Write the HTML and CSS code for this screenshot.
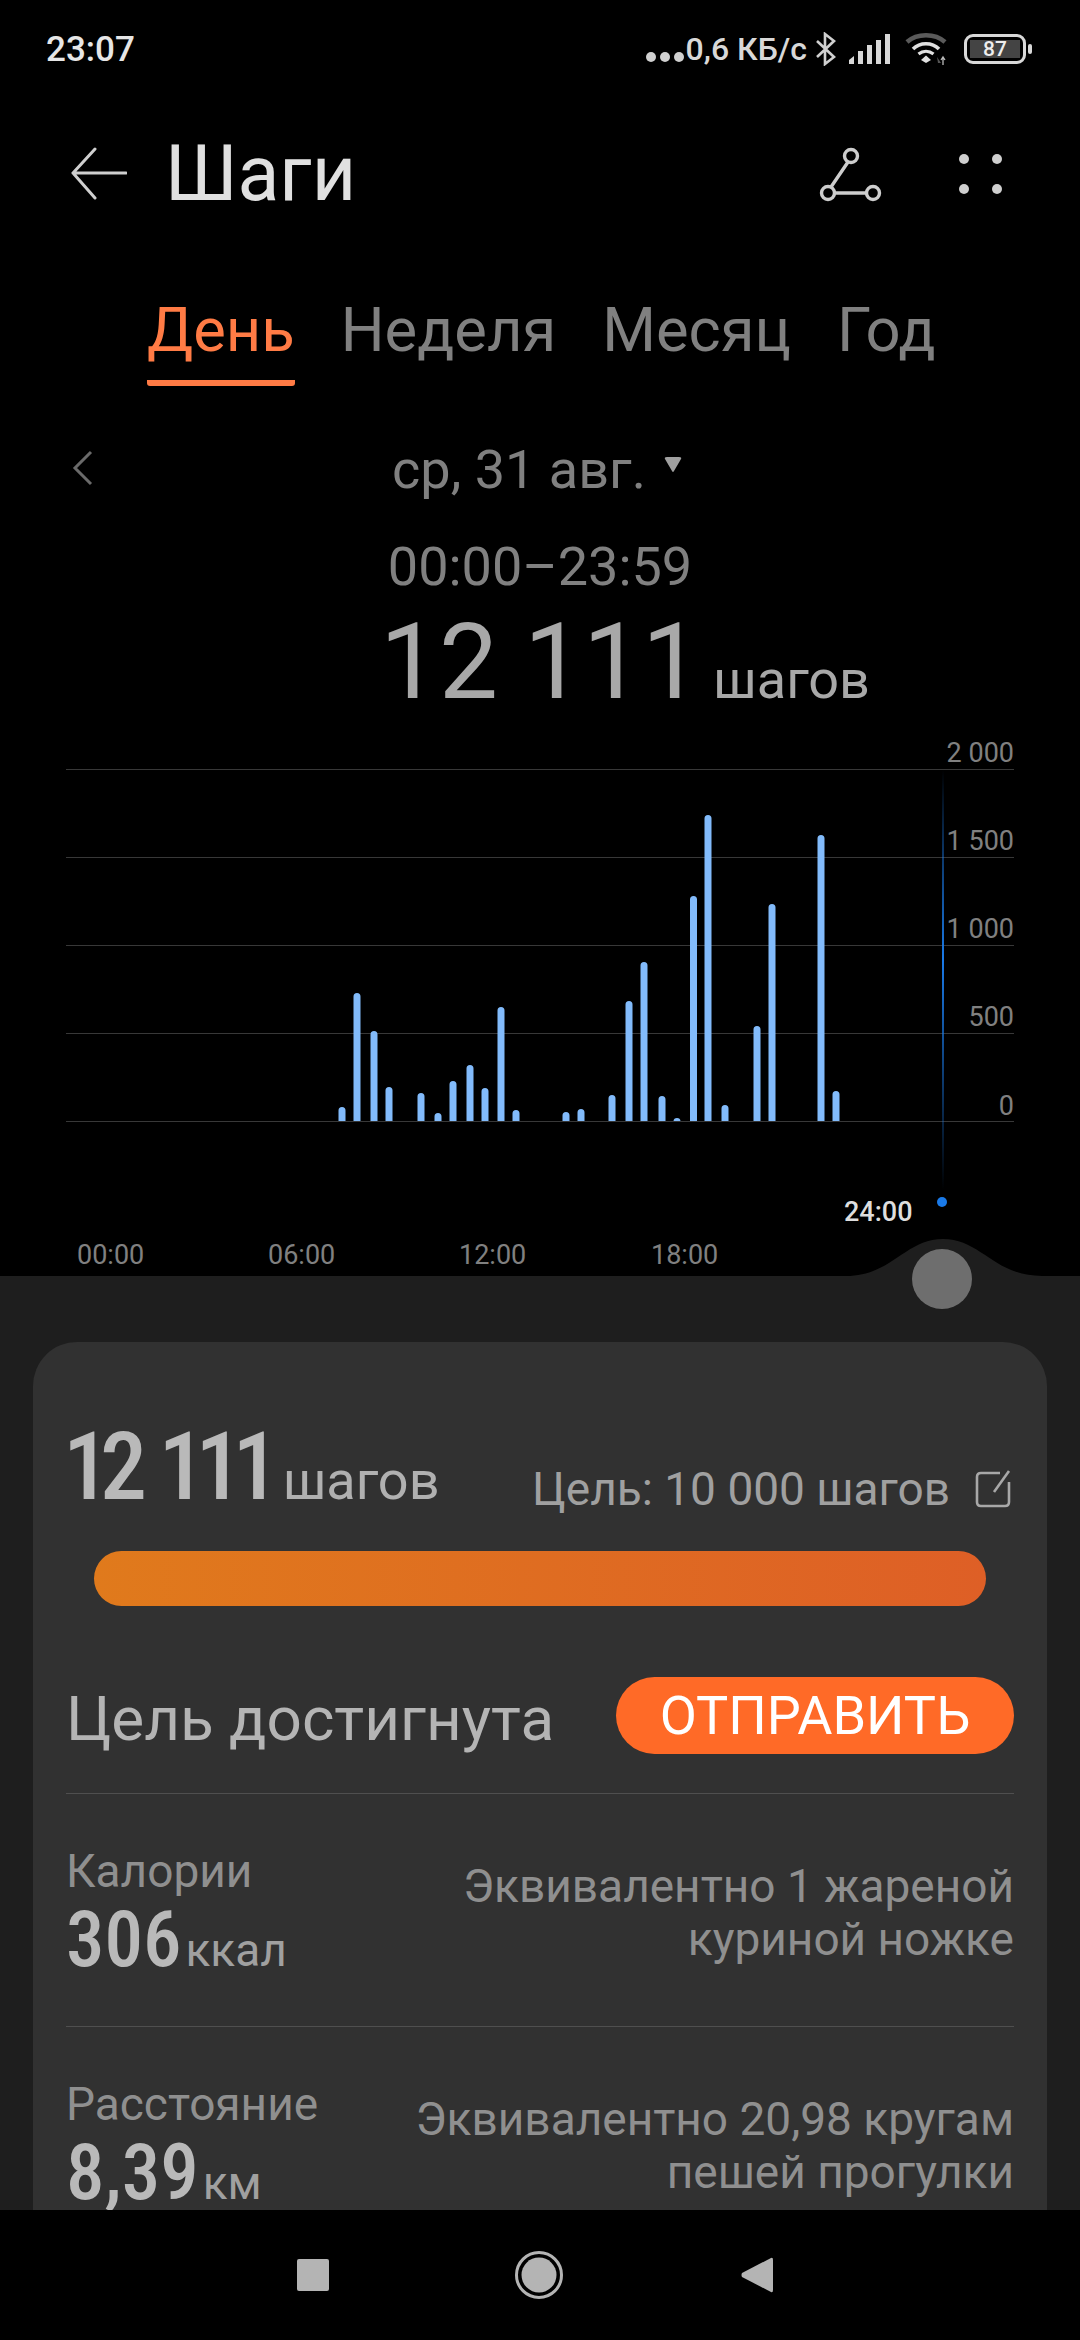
FILE: index.html
```html
<!DOCTYPE html>
<html lang="ru">
<head>
    <meta charset="UTF-8">
    <title>Шаги</title>
    <link rel="stylesheet" href="styles.css">
</head>
<body>
    <div class="phone">
        <div class="status-bar">
            <span class="clock">23:07</span>
            <div class="status-right">
                <span class="status-dots"><i></i><i></i><i></i></span>
                <span class="net-speed">0,6 КБ/с</span>
                <svg class="ic-bt" width="22" height="34" viewBox="0 0 22 34"><path d="M2 9 L19 25 L10 32 V2 L19 9 L2 25" fill="none" stroke="#d0d0d0" stroke-width="2.6"/></svg>
                <svg class="ic-signal" width="41" height="30" viewBox="0 0 41 30"><g fill="#d8d8d8"><path d="M0 30 V26 L5 22 V30Z"/><rect x="9" y="17" width="5" height="13"/><rect x="18" y="11" width="5" height="19"/><rect x="27" y="6" width="5" height="24"/><rect x="36" y="0" width="5" height="30"/></g></svg>
                <svg class="ic-wifi" width="44" height="32" viewBox="0 0 44 32"><path d="M2 9 C12 0 30 0 40 9" fill="none" stroke="#5a5a5a" stroke-width="4.5"/><path d="M8 16 C15 9 27 9 34 16" fill="none" stroke="#e0e0e0" stroke-width="3.6"/><path d="M13.5 21 C18 17.5 24 17.5 28.5 21" fill="none" stroke="#e0e0e0" stroke-width="3.2"/><path d="M16 27 L21 22.5 L26 27 L21 30Z" fill="#e0e0e0"/><path d="M32 24 L36 30 H33Z" fill="#555"/><path d="M38 24 V32 M36 27 L38 24 L40 27" fill="none" stroke="#bbb" stroke-width="1.3"/></svg>
                <div class="battery"><div class="battery-body"><span class="battery-level">87</span></div><div class="battery-tip"></div></div>
            </div>
        </div>

        <div class="app-bar">
            <svg class="back" width="56" height="54" viewBox="0 0 56 54"><path d="M55 26 H2 L24 2 M2 26 L24 51" fill="none" stroke="#cfcfcf" stroke-width="3" stroke-linecap="round" stroke-linejoin="round"/></svg>
            <h1 class="title">Шаги</h1>
            <svg class="share" width="64" height="56" viewBox="0 0 64 56"><g fill="none" stroke="#cdcdcd" stroke-width="3.4"><circle cx="32" cy="10" r="6.5"/><circle cx="9" cy="47" r="6.5"/><circle cx="54" cy="47" r="6.5"/><path d="M29 16 L12 41 M16 47 H47"/></g></svg>
            <div class="more"><i></i><i></i><i></i><i></i></div>
        </div>

        <div class="tabs">
            <span class="tab active">День</span>
            <span class="tab">Неделя</span>
            <span class="tab">Месяц</span>
            <span class="tab">Год</span>
        </div>

        <div class="date-row">
            <svg class="prev" width="22" height="36" viewBox="0 0 22 36"><path d="M19 2 L3 18 L19 34" fill="none" stroke="#6a6a6a" stroke-width="3"/></svg>
            <span class="date">ср, 31 авг.</span>
            <svg class="caret" width="18" height="16" viewBox="0 0 18 16"><path d="M1 2 Q0 0 3 0 H15 Q18 0 17 2 L10 14 Q9 16 8 14Z" fill="#a0a0a0"/></svg>
        </div>
        <div class="range">00:00–23:59</div>
        <div class="headline"><span class="headline-num">12 111</span><span class="headline-unit">шагов</span></div>

        <svg class="chart" width="1080" height="546" viewBox="0 730 1080 546">
            <defs>
                <linearGradient id="cursor" x1="0" y1="0" x2="0" y2="1">
                    <stop offset="0" stop-color="#1a7ae8" stop-opacity="0"/>
                    <stop offset="0.45" stop-color="#1a7ae8"/>
                    <stop offset="1" stop-color="#1a7ae8" stop-opacity="0"/>
                </linearGradient>
                <clipPath id="plot"><rect x="66" y="730" width="948" height="391"/></clipPath>
            </defs>
            <g class="grid">
                <rect x="66" y="769" width="948" height="1"/>
                <rect x="66" y="857" width="948" height="1"/>
                <rect x="66" y="945" width="948" height="1"/>
                <rect x="66" y="1033" width="948" height="1"/>
                <rect x="66" y="1121" width="948" height="1"/>
            </g>
            <g class="bars" clip-path="url(#plot)">
                <path d="M342 1110.500V1125M357 996.500V1125M374 1034.500V1125M389 1090.500V1125M421 1096.500V1125M438 1116.500V1125M453 1084.500V1125M470 1068.500V1125M485 1091.500V1125M501 1010.500V1125M516 1113.500V1125M566 1115.500V1125M581 1112.500V1125M612 1098.500V1125M629 1004.500V1125M644 965.500V1125M662 1099.500V1125M677 1121.500V1125M693.500 899.500V1125M708 818.500V1125M725 1108.500V1125M757 1029.500V1125M772 907.500V1125M821 838.500V1125M836 1094.500V1125"/>
            </g>
            <rect x="942" y="770" width="2" height="420" fill="url(#cursor)"/>
            <circle cx="942" cy="1202" r="5" fill="#1a7ae8"/>
            <g class="y-labels">
                <text x="1014" y="762">2 000</text>
                <text x="1014" y="850">1 500</text>
                <text x="1014" y="938">1 000</text>
                <text x="1014" y="1026">500</text>
                <text x="1014" y="1115">0</text>
            </g>
            <g class="x-labels">
                <text x="77" y="1264">00:00</text>
                <text x="268" y="1264">06:00</text>
                <text x="459" y="1264">12:00</text>
                <text x="651" y="1264">18:00</text>
            </g>
            <text class="now-label" x="844" y="1221">24:00</text>
            <path class="bump" d="M846 1276 C892 1276 905 1239 943 1239 C981 1239 994 1276 1042 1276Z"/>
        </svg>

        <div class="sheet">
            <div class="handle"></div>
            <div class="card">
                <div class="total-row">
                    <div class="total">
                        <span class="big-num total-num">12 111</span>
                        <span class="total-unit">шагов</span>
                    </div>
                    <div class="goal">
                        <span>Цель: 10 000 шагов</span>
                        <svg class="edit" width="36" height="38" viewBox="0 0 36 38"><path d="M25 3 H6 Q2 3 2 7 V32 Q2 36 6 36 H30 Q34 36 34 32 V12" fill="none" stroke="#a8a8a8" stroke-width="2.6"/><path d="M34 1 L19 22" fill="none" stroke="#a8a8a8" stroke-width="2.6"/></svg>
                    </div>
                </div>
                <div class="progress"></div>
                <div class="reached">
                    <span class="reached-text">Цель достигнута</span>
                    <button class="send">ОТПРАВИТЬ</button>
                </div>
                <div class="metric">
                    <div class="metric-left">
                        <div class="metric-name">Калории</div>
                        <div class="metric-value"><span class="big-num metric-num">306</span><span class="metric-unit">ккал</span></div>
                    </div>
                    <div class="metric-note">Эквивалентно 1 жареной<br>куриной ножке</div>
                </div>
                <div class="metric">
                    <div class="metric-left">
                        <div class="metric-name">Расстояние</div>
                        <div class="metric-value"><span class="big-num metric-num">8,39</span><span class="metric-unit">км</span></div>
                    </div>
                    <div class="metric-note">Эквивалентно 20,98 кругам<br>пешей прогулки</div>
                </div>
            </div>
        </div>

        <div class="nav-bar">
            <div class="nav-square"></div>
            <svg class="nav-home" width="48" height="48" viewBox="0 0 48 48"><circle cx="24" cy="24" r="22.500" fill="none" stroke="#b4b4b4" stroke-width="3"/><circle cx="24" cy="24" r="17.500" fill="#b4b4b4"/></svg>
            <svg class="nav-back" width="32" height="36" viewBox="0 0 32 36"><path d="M30 1 Q32 0 32 3 V33 Q32 36 30 35 L1 20 Q0 18 1 16Z" fill="#b4b4b4"/></svg>
        </div>
    </div>
</body>
</html>
```

FILE: styles.css
```css
* {
    margin: 0;
    padding: 0;
    box-sizing: border-box;
}
body {
    width: 1080px;
    height: 2340px;
    overflow: hidden;
    background: #000;
    font-family: Roboto, "Noto Sans", sans-serif;
}
.phone {
    display: flex;
    flex-direction: column;
    height: 2340px;
}

/* status bar */
.status-bar {
    display: flex;
    justify-content: space-between;
    align-items: center;
    height: 98px;
    padding: 0 48px 0 46px;
    color: #e6e6e6;
}
.status-bar .clock {
    font-size: 35px;
    font-weight: 500;
}
.status-right {
    display: flex;
    align-items: center;
}
.status-dots {
    display: flex;
    gap: 4px;
    margin: 16px 2px 0 0;
}
.status-dots i {
    width: 10px;
    height: 10px;
    border-radius: 50%;
    background: #d0d0d0;
}
.net-speed {
    font-size: 32px;
    font-weight: 500;
    color: #d8d8d8;
}
.ic-bt {
    margin-left: 8px;
}
.ic-signal {
    margin-left: 12px;
}
.ic-wifi {
    margin-left: 15px;
}
.battery {
    display: flex;
    align-items: center;
    margin-left: 15px;
}
.battery-body {
    display: flex;
    align-items: center;
    justify-content: center;
    width: 62px;
    height: 30px;
    border: 3px solid #d8d8d8;
    border-radius: 9px;
    padding: 3px;
}
.battery-level {
    display: block;
    width: 100%;
    height: 100%;
    background: #444;
    color: #eee;
    font-size: 21px;
    font-weight: 500;
    line-height: 18px;
    text-align: center;
}
.battery-tip {
    width: 4px;
    height: 10px;
    margin-left: 2px;
    border-radius: 2px;
    background: #d8d8d8;
}

/* app bar */
.app-bar {
    display: flex;
    align-items: center;
    height: 152px;
    padding-left: 71px;
}
.title {
    flex: 1;
    margin-left: 38px;
    font-size: 77px;
    font-weight: 400;
    color: #e0e0e0;
}
.share {
    margin-right: 76px;
}
.more {
    display: grid;
    grid-template-columns: 10px 10px;
    gap: 20px 23px;
    margin-right: 78px;
}
.more i {
    width: 10px;
    height: 10px;
    border-radius: 50%;
    background: #cfcfcf;
}

/* tabs */
.tabs {
    display: flex;
    height: 146px;
    padding: 44px 0 0 147px;
    gap: 46px;
}
.tab {
    height: 92px;
    font-size: 61.5px;
    line-height: 72px;
    color: #808080;
}
.tab.active {
    color: #ff7b45;
    border-bottom: 6px solid #ff7b45;
    border-radius: 0 0 3px 3px;
}

/* date + total */
.date-row {
    position: relative;
    display: flex;
    justify-content: center;
    align-items: center;
    height: 70px;
    margin-top: 38px;
    padding-right: 6px;
    color: #808080;
    font-size: 54px;
}
.prev {
    position: absolute;
    left: 72px;
    top: 16px;
}
.caret {
    margin: -8px 0 0 18px;
}
.range {
    height: 84px;
    margin-top: 21px;
    color: #808080;
    font-size: 54px;
    line-height: 84px;
    text-align: center;
}
.headline {
    display: flex;
    align-items: baseline;
    justify-content: center;
    height: 108px;
    padding-left: 170px;
    color: #a8a8a8;
}
.headline-num {
    font-size: 105px;
    line-height: 108px;
}
.headline-unit {
    margin-left: 12px;
    font-size: 54px;
}

/* chart */
.chart {
    display: block;
    flex: none;
    margin-top: 13px;
}
.grid rect {
    fill: #383838;
}
.bars path {
    stroke: #82bbfb;
    stroke-width: 7;
    stroke-linecap: round;
}
.y-labels text {
    font-size: 27px;
    fill: #808080;
    text-anchor: end;
}
.x-labels text {
    font-size: 27px;
    fill: #808080;
}
.now-label {
    font-size: 27px;
    font-weight: 500;
    fill: #dedede;
}
.bump {
    fill: #1e1e1e;
}

/* bottom sheet */
.sheet {
    position: relative;
    flex: 1;
    min-height: 0;
    padding: 66px 33px 0;
    background: #1e1e1e;
}
.handle {
    position: absolute;
    left: 912px;
    top: -27px;
    width: 60px;
    height: 60px;
    border-radius: 50%;
    background: #6e6e6e;
}
.card {
    height: 868px;
    padding: 0 33px;
    overflow: hidden;
    border-radius: 44px 44px 0 0;
    background: #313131;
}
.big-num {
    font-weight: 460;
    font-stretch: 75%;
    color: #b9b9b9;
}
.total-row {
    display: flex;
    justify-content: space-between;
    align-items: flex-end;
    height: 180px;
}
.total {
    display: flex;
    align-items: baseline;
    margin-left: -3px;
}
.total-num {
    padding-right: 10px;
    font-size: 94px;
    line-height: 110px;
    letter-spacing: -10px;
    word-spacing: 10px;
    white-space: nowrap;
}
.total-unit {
    margin-left: 3px;
    font-size: 54px;
    color: #b0b0b0;
}
.goal {
    display: flex;
    align-items: center;
    margin: 0 3px 6px 0;
    font-size: 46px;
    color: #a0a0a0;
}
.edit {
    margin-left: 25px;
}
.progress {
    height: 55px;
    margin: 29px 28px 0;
    border-radius: 28px;
    background: linear-gradient(90deg, #e07a1c, #de5f26);
}
.reached {
    display: flex;
    justify-content: space-between;
    align-items: center;
    height: 188px;
    border-bottom: 1px solid #4f4f4f;
    padding: 71px 0 39px;
}
.reached-text {
    margin-top: 5px;
    font-size: 62px;
    color: #b4b4b4;
}
.send {
    width: 398px;
    height: 77px;
    border: none;
    border-radius: 39px;
    background: #ff6a27;
    color: #fff;
    font-family: inherit;
    font-size: 54px;
}
.metric {
    display: flex;
    justify-content: space-between;
    align-items: flex-start;
    height: 233px;
    padding-top: 48px;
    border-bottom: 1px solid #4f4f4f;
}
.metric-name {
    font-size: 46px;
    line-height: 58px;
    color: #8f8f8f;
}
.metric-value {
    display: flex;
    align-items: baseline;
    margin-top: 2px;
}
.metric-num {
    font-size: 77px;
    line-height: 76px;
}
.metric-unit {
    margin-left: 4px;
    font-size: 46px;
    color: #a0a0a0;
}
.metric-note {
    margin-top: 18px;
    font-size: 46px;
    line-height: 53px;
    color: #8f8f8f;
    text-align: right;
}

/* nav bar */
.nav-bar {
    position: relative;
    display: flex;
    align-items: center;
    flex: none;
    height: 130px;
    padding-left: 297px;
    background: #000;
}
.nav-square {
    width: 32px;
    height: 32px;
    border-radius: 2px;
    background: #b4b4b4;
}
.nav-home {
    margin-left: 186px;
}
.nav-back {
    margin-left: 178px;
}
```
